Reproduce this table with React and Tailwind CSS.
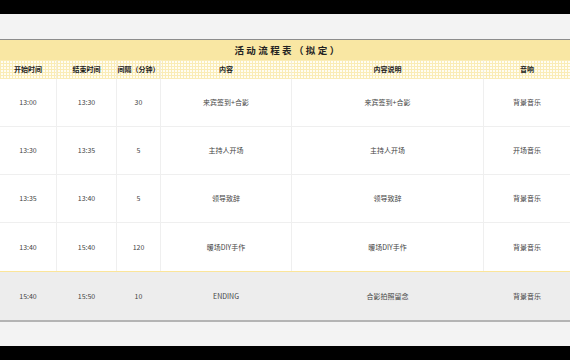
const columns = ["开始时间", "结束时间", "间隔（分钟）", "内容", "内容说明", "音响"];

const rows = [
  { start: "13:00", end: "13:30", gap: "30", content: "来宾签到+合影", note: "来宾签到+合影", audio: "背景音乐" },
  { start: "13:30", end: "13:35", gap: "5", content: "主持人开场", note: "主持人开场", audio: "开场音乐" },
  { start: "13:35", end: "13:40", gap: "5", content: "领导致辞", note: "领导致辞", audio: "背景音乐" },
  { start: "13:40", end: "15:40", gap: "120", content: "暖场DIY手作", note: "暖场DIY手作", audio: "背景音乐" },
];

const lastRow = { start: "15:40", end: "15:50", gap: "10", content: "ENDING", note: "合影拍照留念", audio: "背景音乐" };

const grid = "grid grid-cols-[57px_60px_44px_131px_192px_86px]";

const Row = ({ row, className }) => (
  <div className={`${grid} ${className}`}>
    {[row.start, row.end, row.gap, row.content, row.note, row.audio].map((value, i) => (
      <div key={i} className={`flex items-center justify-center ${i < 5 ? "border-r border-[#efefef]" : ""}`}>
        {value}
      </div>
    ))}
  </div>
);

const App = () => {
  return (
    <div className="flex h-[360px] w-[570px] flex-col bg-black font-['Noto_Sans_CJK_SC',sans-serif] text-[7px] text-[#444]">
      <div className="h-[14px] shrink-0 bg-black" />
      <div className="h-[25px] shrink-0 bg-[#f3f3f3]" />
      <div className="h-px shrink-0 bg-[#8c8c8c]" />

      <div className="flex h-[20px] shrink-0 items-center justify-center bg-[#f9e7a3] pl-[6px] text-[9.5px] font-bold tracking-[2.4px] text-[#222]">
        活动流程表（拟定）
      </div>

      <div className={`${grid} h-[19px] shrink-0 bg-[#fffdf2] bg-[linear-gradient(90deg,#faecb6_1px,transparent_1px),linear-gradient(#faecb6_1px,transparent_1px)] bg-[size:3px_3px] font-bold text-[#222]`}>
        {columns.map((col, i) => (
          <div key={col} className={`flex items-center justify-center ${i < 5 ? "border-r border-[#f3edd6]" : ""}`}>
            {col}
          </div>
        ))}
      </div>

      <div className="shrink-0 bg-white">
        {rows.map((row, i) => (
          <Row key={row.start} row={row} className={`h-[48px] ${i < 3 ? "border-b border-[#efefef]" : ""}`} />
        ))}
      </div>

      <div className="h-px shrink-0 bg-[#fbe59a]" />
      <Row row={lastRow} className="h-[48px] shrink-0 bg-[#ededed] [&>div]:border-transparent" />
      <div className="h-[2px] shrink-0 bg-[#b4b4b4]" />
      <div className="h-[24px] shrink-0 bg-[#f3f3f3]" />
      <div className="flex-1 bg-black" />
    </div>
  );
};

export default App;
